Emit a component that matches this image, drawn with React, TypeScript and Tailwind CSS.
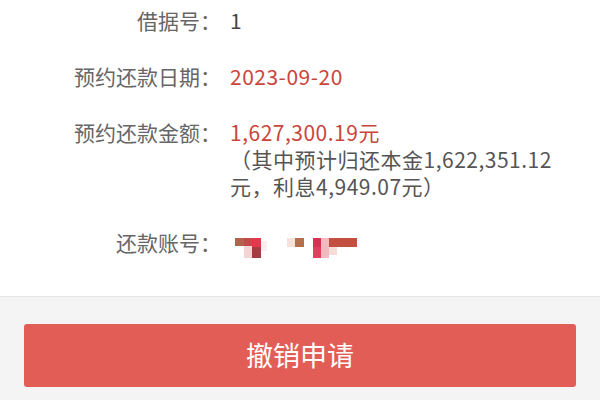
import React from "react";

const FONT = {
  fontFamily: '"Noto Sans CJK SC", "Liberation Sans", sans-serif',
};

type Cell = { x: number; y: number; w: number; h: number; c: string };

// 打码后的账号（马赛克方块）
const MOSAIC: Cell[] = [
  { x: 0, y: 0, w: 9, h: 8, c: "#b5624c" },
  { x: 9, y: 0, w: 8, h: 8, c: "#c24a4a" },
  { x: 17, y: 0, w: 9, h: 9, c: "#e2394f" },
  { x: 9, y: 8, w: 8, h: 12, c: "#f3d6d3" },
  { x: 17, y: 9, w: 9, h: 11, c: "#a43c42" },
  { x: 26, y: 3, w: 6, h: 10, c: "#fbeeee" },
  { x: 52, y: 0, w: 8, h: 9, c: "#f5e2da" },
  { x: 60, y: 0, w: 9, h: 9, c: "#b3704f" },
  { x: 78, y: 0, w: 8, h: 9, c: "#d83152" },
  { x: 78, y: 9, w: 8, h: 11, c: "#e2405f" },
  { x: 86, y: 0, w: 8, h: 20, c: "#f4b8bf" },
  { x: 94, y: 0, w: 28, h: 9, c: "#c24f3f" },
  { x: 94, y: 9, w: 8, h: 8, c: "#f6dcd8" },
];

function Mosaic() {
  return (
    <div className="relative h-[20px] w-[124px] mt-[9px] ml-[5px]">
      {MOSAIC.map((m, i) => (
        <div
          key={i}
          className="absolute"
          style={{ left: m.x, top: m.y, width: m.w, height: m.h, background: m.c }}
        />
      ))}
    </div>
  );
}

function Row({ label, children }: { label: string; children: React.ReactNode }) {
  return (
    <div className="flex items-start">
      <div className="w-[221px] shrink-0 text-right text-[#666] text-[21px]">{label}</div>
      <div className="pl-[9px] w-[347px] shrink-0 tracking-[0.5px]">{children}</div>
    </div>
  );
}

export default function App() {
  return (
    <div className="w-[600px] h-[400px] overflow-hidden bg-[#f4f4f4]" style={FONT}>
      <div className="bg-white h-[297px] border-b border-[#e4e4e4] flex flex-col gap-[29px] pt-[7px] text-[21px] leading-[27px]">
        <Row label="借据号：">
          <span className="text-[#444]">1</span>
        </Row>
        <Row label="预约还款日期：">
          <span className="text-[#c9453c]">2023-09-20</span>
        </Row>
        <Row label="预约还款金额：">
          <div className="text-[#c9453c]">1,627,300.19元</div>
          <div className="text-[#555]">（其中预计归还本金1,622,351.12元，利息4,949.07元）</div>
        </Row>
        <Row label="还款账号：">
          <Mosaic />
        </Row>
      </div>
      <div className="px-[24px] pt-[27px]">
        <button className="w-full h-[63px] rounded-[3px] bg-[#e35d57] text-white text-[27px] flex items-center justify-center">
          撤销申请
        </button>
      </div>
    </div>
  );
}
